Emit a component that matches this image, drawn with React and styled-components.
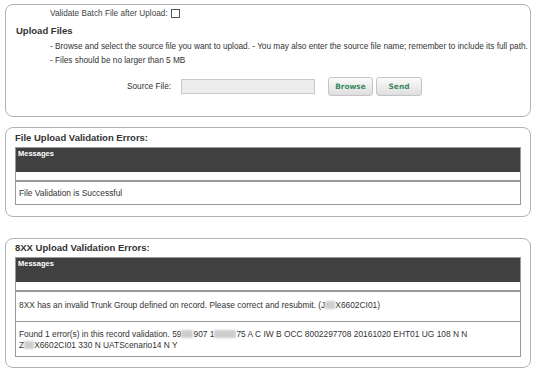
import React from 'react'
import styled, { createGlobalStyle } from 'styled-components'

const GlobalStyle = createGlobalStyle`
  body {
    margin: 0;
    background: #fff;
    font-family: "Liberation Sans", Arial, sans-serif;
    color: #333;
  }
`

const Page = styled.div`
  display: flex;
  flex-direction: column;
  padding: 4px 6px 0 5px;
`

const Panel = styled.section`
  border: 1px solid #b2b2b2;
  border-radius: 8px;
  padding: ${(p) => p.$pad};
  margin-bottom: ${(p) => p.$gap || 0}px;
`

const CheckRow = styled.div`
  display: flex;
  align-items: center;
  height: 11px;
  padding-left: 44px;
  font-size: 8.25px;
  color: #444;
`

const Check = styled.span`
  display: inline-block;
  width: 7px;
  height: 7px;
  margin-left: 3px;
  border: 1px solid #555;
  background: #fff;
`

const Title = styled.h2`
  margin: 0 0 0 ${(p) => p.$ml || 0}px;
  font-size: 9.5px;
  line-height: 12px;
  font-weight: bold;
  color: #333;
`

const Note = styled.p`
  margin: ${(p) => p.$mt}px 0 0 44px;
  font-size: 8.25px;
  line-height: 10px;
  white-space: nowrap;
  color: #333;
`

const SourceRow = styled.div`
  display: flex;
  align-items: center;
  margin-top: 11px;
  padding-left: 121px;
  height: 19px;
`

const Label = styled.label`
  font-size: 8.25px;
  color: #333;
  width: 48px;
  margin-right: 6px;
`

const FileInput = styled.div`
  width: 132px;
  height: 13px;
  background: #ededed;
  border: 1px solid #c9c9c9;
  margin-right: 13px;
`

const Button = styled.button`
  width: ${(p) => p.$w}px;
  height: 19px;
  margin-right: 3px;
  padding: 0;
  border: 1px solid #c4c4c4;
  border-radius: 3px;
  background: linear-gradient(#fbfbfb, #dedede);
  color: #3b8a5c;
  font-family: "DejaVu Sans", Verdana, sans-serif;
  font-weight: bold;
  font-size: 7.4px;
`

const Table = styled.table`
  width: 100%;
  margin-top: ${(p) => p.$mt}px;
  border-collapse: collapse;
  border: 1px solid #9a9a9a;
  font-size: 8.4px;
  color: #333;
`

const Head = styled.th`
  height: 23px;
  padding: 1px 2px 0;
  background: #404040;
  color: #fff;
  font-size: 7.5px;
  font-weight: bold;
  text-align: left;
  vertical-align: top;
`

const Spacer = styled.td`
  height: 8px;
  padding: 0;
  border-bottom: 2px solid #999;
`

const Cell = styled.td`
  padding: ${(p) => p.$pad};
  line-height: ${(p) => p.$lh || 10}px;
  border-top: 1px solid #999;
  vertical-align: top;
`

const Hidden = styled.span`
  display: inline-block;
  width: ${(p) => p.$w}px;
  height: 8px;
  vertical-align: -1px;
  background: #cdcdcd;
  filter: blur(0.8px);
`

const MessageTable = ({ mt, rows }) => (
  <Table $mt={mt}>
    <thead>
      <tr>
        <Head>Messages</Head>
      </tr>
    </thead>
    <tbody>
      <tr>
        <Spacer />
      </tr>
      {rows.map((r, i) => (
        <tr key={i}>
          <Cell $pad={r.pad} $lh={r.lh}>
            {r.content}
          </Cell>
        </tr>
      ))}
    </tbody>
  </Table>
)

export default function App() {
  return (
    <>
      <GlobalStyle />
      <Page>
        <Panel $pad="3px 0 20px" $gap={10}>
          <CheckRow>
            Validate Batch File after Upload:
            <Check />
          </CheckRow>
          <Title $ml={10} style={{ marginTop: 6 }}>
            Upload Files
          </Title>
          <Note $mt={5}>
            - Browse and select the source file you want to upload. - You may also enter the source file
            name; remember to include its full path.
          </Note>
          <Note $mt={4}>- Files should be no larger than 5 MB</Note>
          <SourceRow>
            <Label>Source File:</Label>
            <FileInput />
            <Button $w={45}>Browse</Button>
            <Button $w={46}>Send</Button>
          </SourceRow>
        </Panel>

        <Panel $pad="4px 9px 11px" $gap={21}>
          <Title>File Upload Validation Errors:</Title>
          <MessageTable
            mt={3}
            rows={[{ pad: '6px 3px 6px', content: 'File Validation is Successful' }]}
          />
        </Panel>

        <Panel $pad="3px 9px 10px">
          <Title>8XX Upload Validation Errors:</Title>
          <MessageTable
            mt={3}
            rows={[
              {
                pad: '8px 3px 11px',
                content: (
                  <>
                    8XX has an invalid Trunk Group defined on record. Please correct and resubmit. (J
                    <Hidden $w={10} />
                    X6602CI01)
                  </>
                ),
              },
              {
                pad: '7px 3px 5px',
                lh: 11,
                content: (
                  <>
                    Found 1 error(s) in this record validation. 59
                    <Hidden $w={12} />
                    907 1<Hidden $w={22} />
                    75 A C IW B OCC 8002297708 20161020 EHT01 UG 108 N N
                    <br />Z<Hidden $w={10} />
                    X6602CI01 330 N UATScenario14 N Y
                  </>
                ),
              },
            ]}
          />
        </Panel>
      </Page>
    </>
  )
}
